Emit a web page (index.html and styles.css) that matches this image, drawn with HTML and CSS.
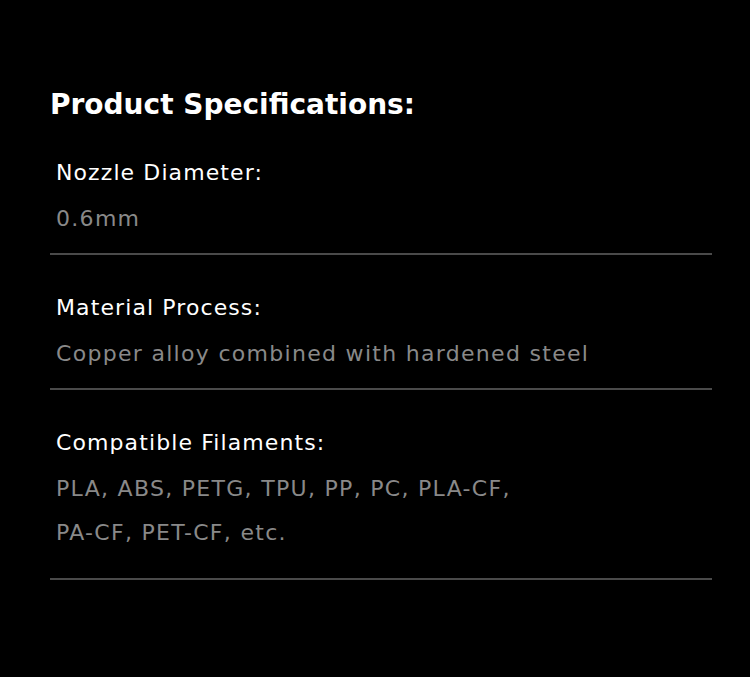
FILE: index.html
```html
<!DOCTYPE html>
<html lang="en">
<head>
<meta charset="utf-8">
<title>Product Specifications</title>
<link rel="stylesheet" href="styles.css">
</head>
<body>
<main class="specs">
  <h2 class="specs-title">Product Specifications:</h2>
  <section class="spec spec-first">
    <div class="spec-label">Nozzle Diameter:</div>
    <div class="spec-value">0.6mm</div>
  </section>
  <section class="spec">
    <div class="spec-label">Material Process:</div>
    <div class="spec-value">Copper alloy combined with hardened steel</div>
  </section>
  <section class="spec spec-last">
    <div class="spec-label">Compatible Filaments:</div>
    <div class="spec-value">PLA, ABS, PETG, TPU, PP, PC, PLA-CF,<br>PA-CF, PET-CF, etc.</div>
  </section>
</main>
</body>
</html>
```
FILE: styles.css
```css
html, body {
  margin: 0;
  padding: 0;
  background: #000;
}
body {
  width: 750px;
  height: 677px;
  font-family: "DejaVu Sans", "Open Sans", sans-serif;
}
.specs {
  padding: 85px 38px 0 50px;
}
.specs-title {
  margin: 0;
  color: #fff;
  font-size: 28px;
  font-weight: 700;
  line-height: 40px;
  letter-spacing: 0;
}
.spec {
  border-bottom: 2px solid #4a4a4a;
  padding: 38px 6px 12px;
}
.spec-first {
  padding-top: 33px;
}
.spec-last {
  padding-bottom: 23px;
}
.spec-label {
  color: #fff;
  font-size: 22px;
  line-height: 30px;
  letter-spacing: 1.1px;
}
.spec-value {
  color: #898989;
  font-size: 22px;
  line-height: 44px;
  letter-spacing: 1.3px;
  margin-top: 9px;
}
```
